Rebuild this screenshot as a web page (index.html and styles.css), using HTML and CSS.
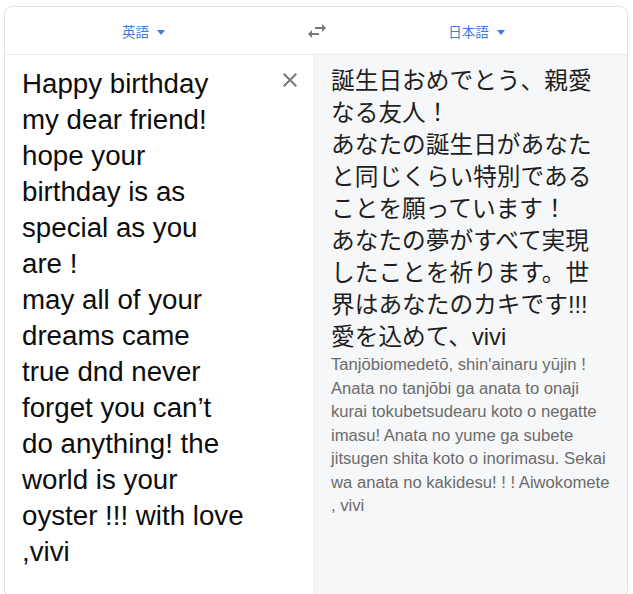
FILE: index.html
```html
<!DOCTYPE html>
<html lang="ja">
<head>
<meta charset="utf-8">
<title>翻訳</title>
<link rel="stylesheet" href="styles.css">
</head>
<body>
<div class="card">
  <div class="header">
    <div class="lang lang-src"><span>英語</span><span class="caret"></span></div>
    <div class="swap">
      <svg viewBox="0 0 24 24" width="24" height="24"><path d="M6.99 11L3 15l3.99 4v-3H14v-2H6.99v-3zM21 9l-3.99-4v3H10v2h7.01v3L21 9z"/></svg>
    </div>
    <div class="lang lang-tgt"><span>日本語</span><span class="caret"></span></div>
  </div>
  <div class="panes">
    <div class="src">
      <div class="src-text">Happy birthday<br>my dear friend!<br>hope your<br>birthday is as<br>special as you<br>are !<br>may all of your<br>dreams came<br>true dnd never<br>forget you can’t<br>do anything! the<br>world is your<br>oyster !!! with love<br>,vivi</div>
      <div class="clear">
        <svg viewBox="0 0 24 24" width="24" height="24"><path d="M19 6.41L17.59 5 12 10.59 6.41 5 5 6.41 10.59 12 5 17.59 6.41 19 12 13.41 17.59 19 19 17.59 13.41 12z"/></svg>
      </div>
    </div>
    <div class="tgt">
      <div class="tgt-text">誕生日おめでとう、親愛<br>なる友人！<br>あなたの誕生日があなた<br>と同じくらい特別である<br>ことを願っています！<br>あなたの夢がすべて実現<br>したことを祈ります。世<br>界はあなたのカキです!!!<br>愛を込めて、vivi</div>
      <div class="translit">Tanjōbiomedetō, shin'ainaru yūjin !<br>Anata no tanjōbi ga anata to onaji<br>kurai tokubetsudearu koto o negatte<br>imasu! Anata no yume ga subete<br>jitsugen shita koto o inorimasu. Sekai<br>wa anata no kakidesu! ! ! Aiwokomete<br>, vivi</div>
    </div>
  </div>
</div>
</body>
</html>
```

FILE: styles.css
```css
html, body {
  margin: 0;
  padding: 0;
  background: #ffffff;
  overflow: hidden;
}

body {
  font-family: "Liberation Sans", "Noto Sans CJK JP", sans-serif;
}

.card {
  margin: 6px 5px 0 4px;
  height: 592px;
  border: 1px solid #e1e3e6;
  border-radius: 8px;
  display: flex;
  flex-direction: column;
  overflow: hidden;
  box-sizing: border-box;
}

.header {
  height: 48px;
  flex: none;
  display: grid;
  grid-template-columns: 1fr 48px 1fr;
  align-items: center;
  border-bottom: 1px solid #e8eaed;
  box-sizing: border-box;
}

.lang {
  display: flex;
  align-items: center;
  justify-content: center;
  gap: 8px;
  font-family: "Noto Sans CJK JP", sans-serif;
  font-size: 13.5px;
  color: #3d7be0;
  padding-top: 1px;
}

.lang-src {
  padding-right: 10px;
}

.lang-tgt {
  padding-right: 14px;
}

.caret {
  width: 0;
  height: 0;
  border-left: 4.5px solid transparent;
  border-right: 4.5px solid transparent;
  border-top: 5px solid #3d7be0;
  margin-top: 2px;
}

.swap {
  display: flex;
  justify-content: center;
  align-items: center;
  margin-left: 1px;
}

.swap svg {
  fill: #777777;
}

.panes {
  flex: 1;
  display: grid;
  grid-template-columns: 310px 1fr;
}

.src {
  display: flex;
  align-items: flex-start;
  padding: 11px 12px 0 17px;
  border-right: 1px solid #e8eaed;
  background: #ffffff;
}

.src-text {
  flex: 1;
  font-size: 27.7px;
  line-height: 36px;
  color: #0d0d0d;
}

.clear {
  width: 24px;
  height: 24px;
  margin-top: 2px;
  flex: none;
}

.clear svg {
  fill: #777777;
}

.tgt {
  background: #f6f7f8;
  padding: 10px 10px 0 16px;
}

.tgt-text {
  font-family: "Liberation Sans", "Noto Sans CJK JP", sans-serif;
  font-size: 23.7px;
  line-height: 32px;
  color: #1f1f1f;
}

.translit {
  font-size: 16.65px;
  line-height: 23.5px;
  color: #6b6b6b;
}
```
